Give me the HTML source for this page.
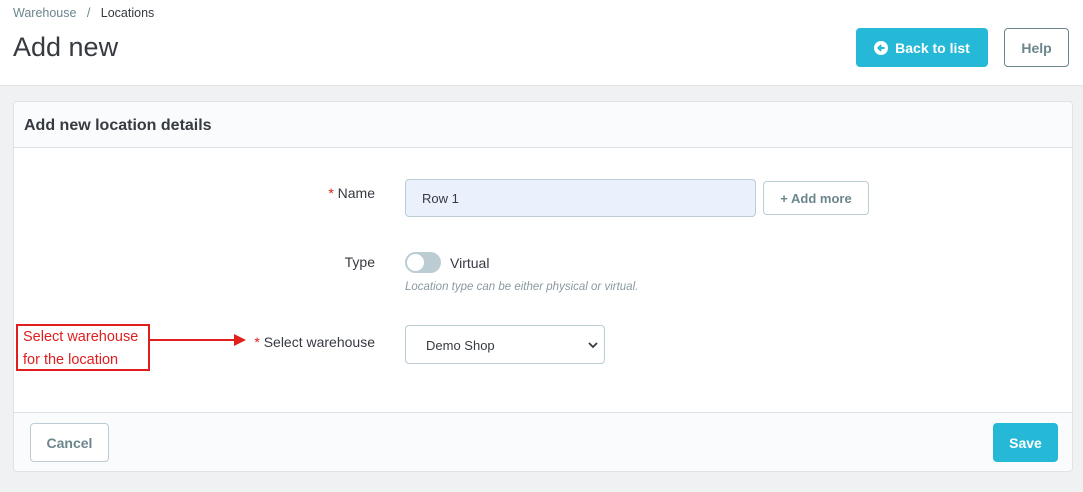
<!DOCTYPE html>
<html><head><meta charset="utf-8"><style>
*{box-sizing:border-box;margin:0;padding:0}
body{width:1083px;height:492px;background:#eff1f2;font-family:"Liberation Sans",sans-serif;color:#363a41;position:relative;overflow:hidden}
.top{position:absolute;left:0;top:0;width:1083px;height:86px;background:#fff;border-bottom:1px solid #dfe3e6}
.bc{position:absolute;left:13px;top:6px;font-size:12.5px;color:#6c868e}
.bc b{font-weight:normal;color:#363a41}
h1{position:absolute;left:13px;top:32px;font-size:27px;font-weight:normal;color:#363a41}
.btn{position:absolute;border-radius:4px;font-size:14px;font-weight:bold;display:flex;align-items:center;justify-content:center}
.card{position:absolute;left:13px;top:101px;width:1060px;height:371px;background:#fff;border:1px solid #dfe3e6;border-radius:4px;overflow:hidden}
.ch{height:46px;background:#fafbfc;border-bottom:1px solid #dfe3e6;padding:15px 10px;font-weight:bold;font-size:16px}
.cf{position:absolute;left:0;top:310px;width:100%;height:61px;background:#fafbfc;border-top:1px solid #dfe3e6}
.lbl{position:absolute;font-size:14px;color:#363a41;text-align:right;right:698px}
.req{color:#e01e1e}
</style></head><body>
<div class="top">
<div class="bc">Warehouse &nbsp; / &nbsp; <b>Locations</b></div>
<h1>Add new</h1>
<div class="btn" style="left:856px;top:28px;width:132px;height:39px;background:#25b9d7;color:#fff"><svg width="14" height="14" viewBox="0 0 14 14" style="margin-right:7px"><circle cx="7" cy="7" r="7" fill="#fff"/><path d="M10.5 7H4.5M7.2 4.2 4.4 7l2.8 2.8" stroke="#25b9d7" stroke-width="2" fill="none"/></svg>Back to list</div>
<div class="btn" style="left:1004px;top:28px;width:65px;height:39px;border:1px solid #6c868e;color:#6c868e;font-weight:bold">Help</div>
</div>
<div class="card">
<div class="ch">Add new location details</div>
<div class="cf"></div>
<div class="btn" style="left:16px;top:321px;width:79px;height:39px;border:1px solid #bbcdd2;color:#6c868e;background:#fff">Cancel</div>
<div class="btn" style="left:979px;top:321px;width:65px;height:39px;background:#25b9d7;color:#fff">Save</div>
</div>
<div class="lbl" style="top:185px;right:708px"><span class="req">*</span> Name</div>
<div style="position:absolute;left:405px;top:179px;width:351px;height:38px;background:#eaf1fd;border:1px solid #bbcdd2;border-radius:4px;font-size:13px;padding:11px 16px">Row 1</div>
<div class="btn" style="left:763px;top:181px;width:106px;height:34px;border:1px solid #bbcdd2;background:#fff;color:#6c868e;font-size:13px">+ Add more</div>
<div class="lbl" style="top:254px;right:708px">Type</div>
<div style="position:absolute;left:405px;top:252px;width:36px;height:21px;background:#bbcdd2;border-radius:11px"><div style="position:absolute;left:2px;top:2px;width:17px;height:17px;background:#fff;border-radius:50%"></div></div>
<div style="position:absolute;left:450px;top:255px;font-size:14px">Virtual</div>
<div style="position:absolute;left:405px;top:281px;font-size:11.5px;font-style:italic;color:#8a9aa0">Location type can be either physical or virtual.</div>
<div class="lbl" style="top:334px;right:708px"><span class="req">*</span> Select warehouse</div>
<div style="position:absolute;left:405px;top:325px;width:200px;height:39px;background:#fff;border:1px solid #bbcdd2;border-radius:4px;font-size:13px;padding:12px 20px">Demo Shop<svg width="10" height="7" viewBox="0 0 10 7" style="position:absolute;right:6px;top:16px"><path d="M1 1l4 4 4-4" stroke="#363a41" stroke-width="1.8" fill="none"/></svg></div>
<div style="position:absolute;left:16px;top:324px;width:134px;height:47px;border:2px solid #e01e1e;color:#e01e1e;font-size:14.5px;line-height:23px;padding:0 5px;background:#fff">Select warehouse<br>for the location</div>
<div style="position:absolute;left:150px;top:339px;width:86px;height:2px;background:#e01e1e"></div>
<svg style="position:absolute;left:234px;top:334px" width="12" height="12"><path d="M0 0L12 6L0 12Z" fill="#e01e1e"/></svg>
</body></html>
